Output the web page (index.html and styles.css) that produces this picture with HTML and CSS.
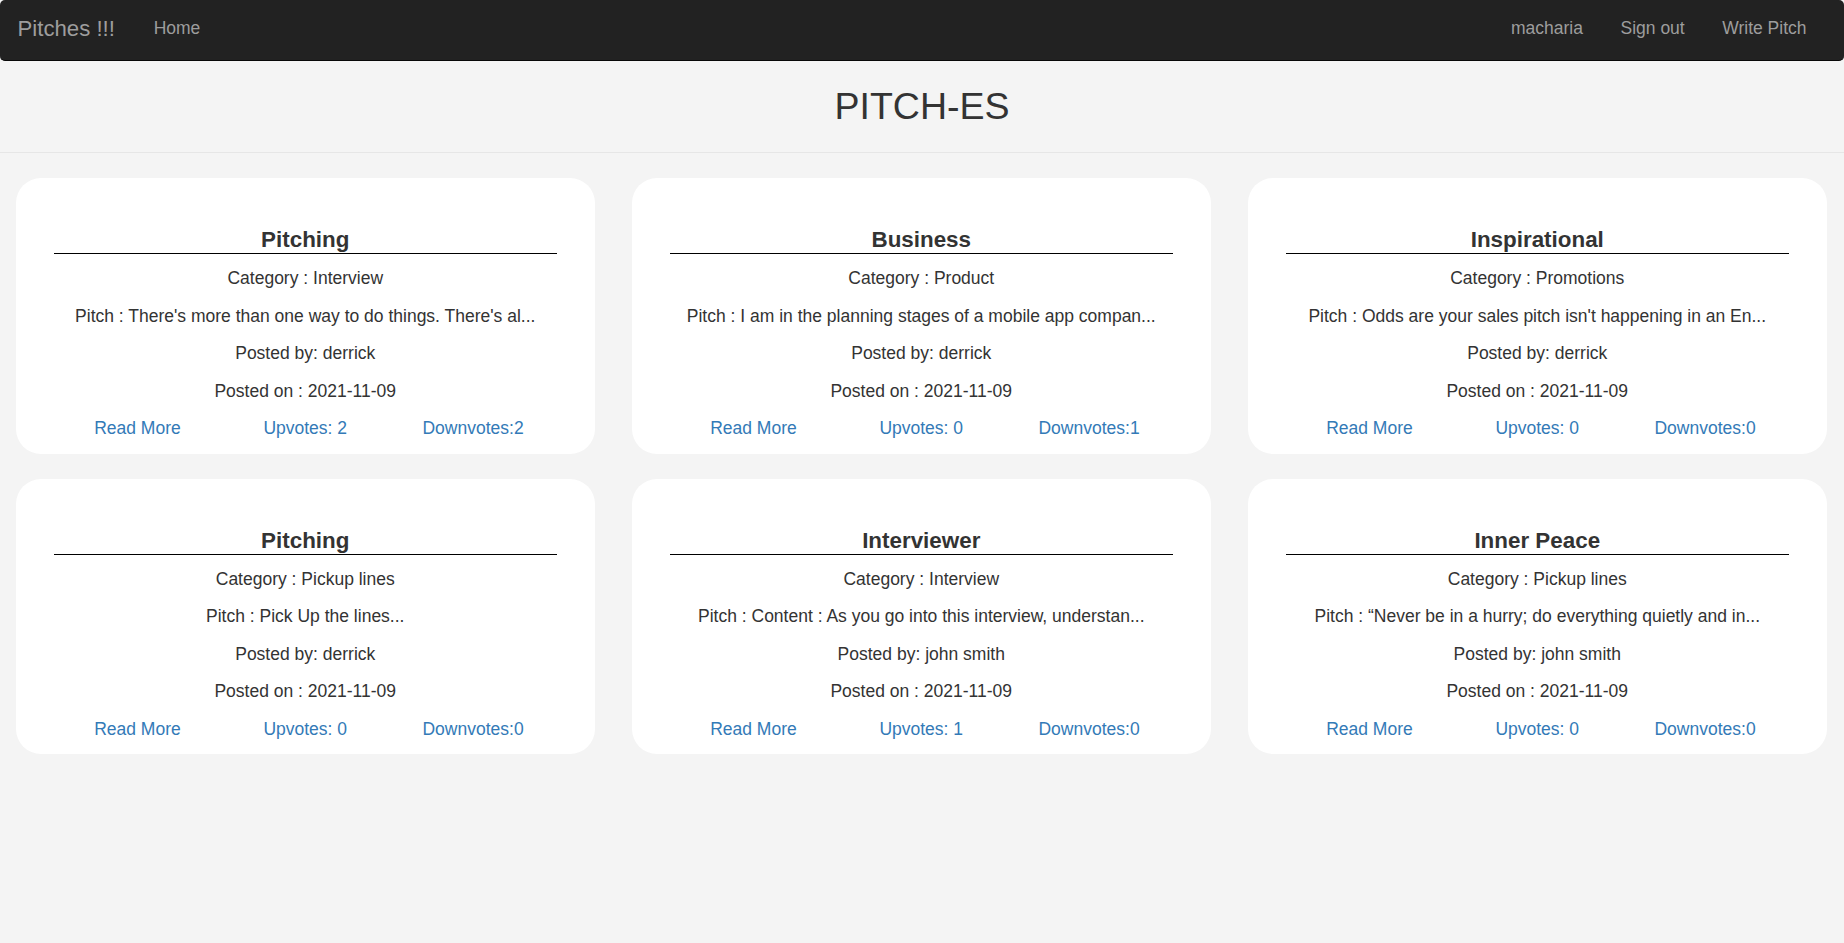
FILE: index.html
```html
<!DOCTYPE html>
<html lang="en">
<head>
<meta charset="utf-8">
<title>Pitches</title>
<link rel="stylesheet" href="styles.css">
</head>
<body>
<nav class="navbar">
  <div class="nav-left">
    <a class="brand" href="#">Pitches !!!</a>
    <a class="nav-link" href="#">Home</a>
  </div>
  <div class="nav-right">
    <a class="nav-link" href="#">macharia</a>
    <a class="nav-link" href="#">Sign out</a>
    <a class="nav-link" href="#">Write Pitch</a>
  </div>
</nav>
<header class="page-head">
  <h2 class="page-title">PITCH-ES</h2>
</header>
<main class="cards">
  <div class="card">
    <h4 class="card-title">Pitching</h4>
    <p>Category : Interview</p>
    <p>Pitch : There's more than one way to do things. There's al...</p>
    <p>Posted by: derrick</p>
    <p>Posted on : 2021-11-09</p>
    <div class="card-links"><a href="#">Read More</a><a href="#">Upvotes: 2</a><a href="#">Downvotes:2</a></div>
  </div>
  <div class="card">
    <h4 class="card-title">Business</h4>
    <p>Category : Product</p>
    <p>Pitch : I am in the planning stages of a mobile app compan...</p>
    <p>Posted by: derrick</p>
    <p>Posted on : 2021-11-09</p>
    <div class="card-links"><a href="#">Read More</a><a href="#">Upvotes: 0</a><a href="#">Downvotes:1</a></div>
  </div>
  <div class="card">
    <h4 class="card-title">Inspirational</h4>
    <p>Category : Promotions</p>
    <p>Pitch : Odds are your sales pitch isn't happening in an En...</p>
    <p>Posted by: derrick</p>
    <p>Posted on : 2021-11-09</p>
    <div class="card-links"><a href="#">Read More</a><a href="#">Upvotes: 0</a><a href="#">Downvotes:0</a></div>
  </div>
  <div class="card">
    <h4 class="card-title">Pitching</h4>
    <p>Category : Pickup lines</p>
    <p>Pitch : Pick Up the lines...</p>
    <p>Posted by: derrick</p>
    <p>Posted on : 2021-11-09</p>
    <div class="card-links"><a href="#">Read More</a><a href="#">Upvotes: 0</a><a href="#">Downvotes:0</a></div>
  </div>
  <div class="card">
    <h4 class="card-title">Interviewer</h4>
    <p>Category : Interview</p>
    <p>Pitch : Content : As you go into this interview, understan...</p>
    <p>Posted by: john smith</p>
    <p>Posted on : 2021-11-09</p>
    <div class="card-links"><a href="#">Read More</a><a href="#">Upvotes: 1</a><a href="#">Downvotes:0</a></div>
  </div>
  <div class="card">
    <h4 class="card-title">Inner Peace</h4>
    <p>Category : Pickup lines</p>
    <p>Pitch : “Never be in a hurry; do everything quietly and in...</p>
    <p>Posted by: john smith</p>
    <p>Posted on : 2021-11-09</p>
    <div class="card-links"><a href="#">Read More</a><a href="#">Upvotes: 0</a><a href="#">Downvotes:0</a></div>
  </div>
</main>
</body>
</html>
```
FILE: styles.css
```css
* { box-sizing: border-box; }

html, body {
  margin: 0;
  padding: 0;
}

body {
  background: #f4f4f4;
  color: #333;
  font-family: "Liberation Sans", Arial, Helvetica, sans-serif;
  font-size: 17.5px;
  line-height: 25px;
  min-height: 943px;
}

a { text-decoration: none; }

.navbar {
  display: flex;
  justify-content: space-between;
  height: 61px;
  background: #222;
  border-bottom: 1px solid #080808;
  border-radius: 5px;
  padding: 0 18.75px 0 0;
}

.nav-left, .nav-right {
  display: flex;
  align-items: flex-start;
}

.brand {
  color: #9d9d9d;
  font-size: 22.2px;
  line-height: 25px;
  padding: 16px 20px 0 17.5px;
}

.nav-link {
  color: #9d9d9d;
  font-size: 17.5px;
  line-height: 25px;
  padding: 16px 18.75px 0;
}

.page-head {
  padding: 24px 0 25px;
  border-bottom: 1px solid #e6e6e6;
  text-align: center;
}

.page-title {
  margin: 0;
  font-size: 37.5px;
  font-weight: 500;
  line-height: 42px;
  color: #333;
}

.cards {
  display: grid;
  grid-template-columns: repeat(3, 1fr);
  column-gap: 37.5px;
  row-gap: 25px;
  padding: 25px 17.5px 0 16px;
}

.card {
  display: flow-root;
  background: #fff;
  border-radius: 25px;
  padding: 49px 37.5px 0;
  text-align: center;
}

.card-title {
  margin: 0 0 12px;
  font-size: 22.4px;
  font-weight: bold;
  line-height: 25px;
  padding-bottom: 1px;
  border-bottom: 1px solid #000;
  color: #333;
}

.card p {
  margin: 0 0 12.5px;
  white-space: nowrap;
}

.card-links {
  display: grid;
  grid-template-columns: repeat(3, 1fr);
  margin-bottom: 12.5px;
}

.card-links a {
  color: #337ab7;
}
```
